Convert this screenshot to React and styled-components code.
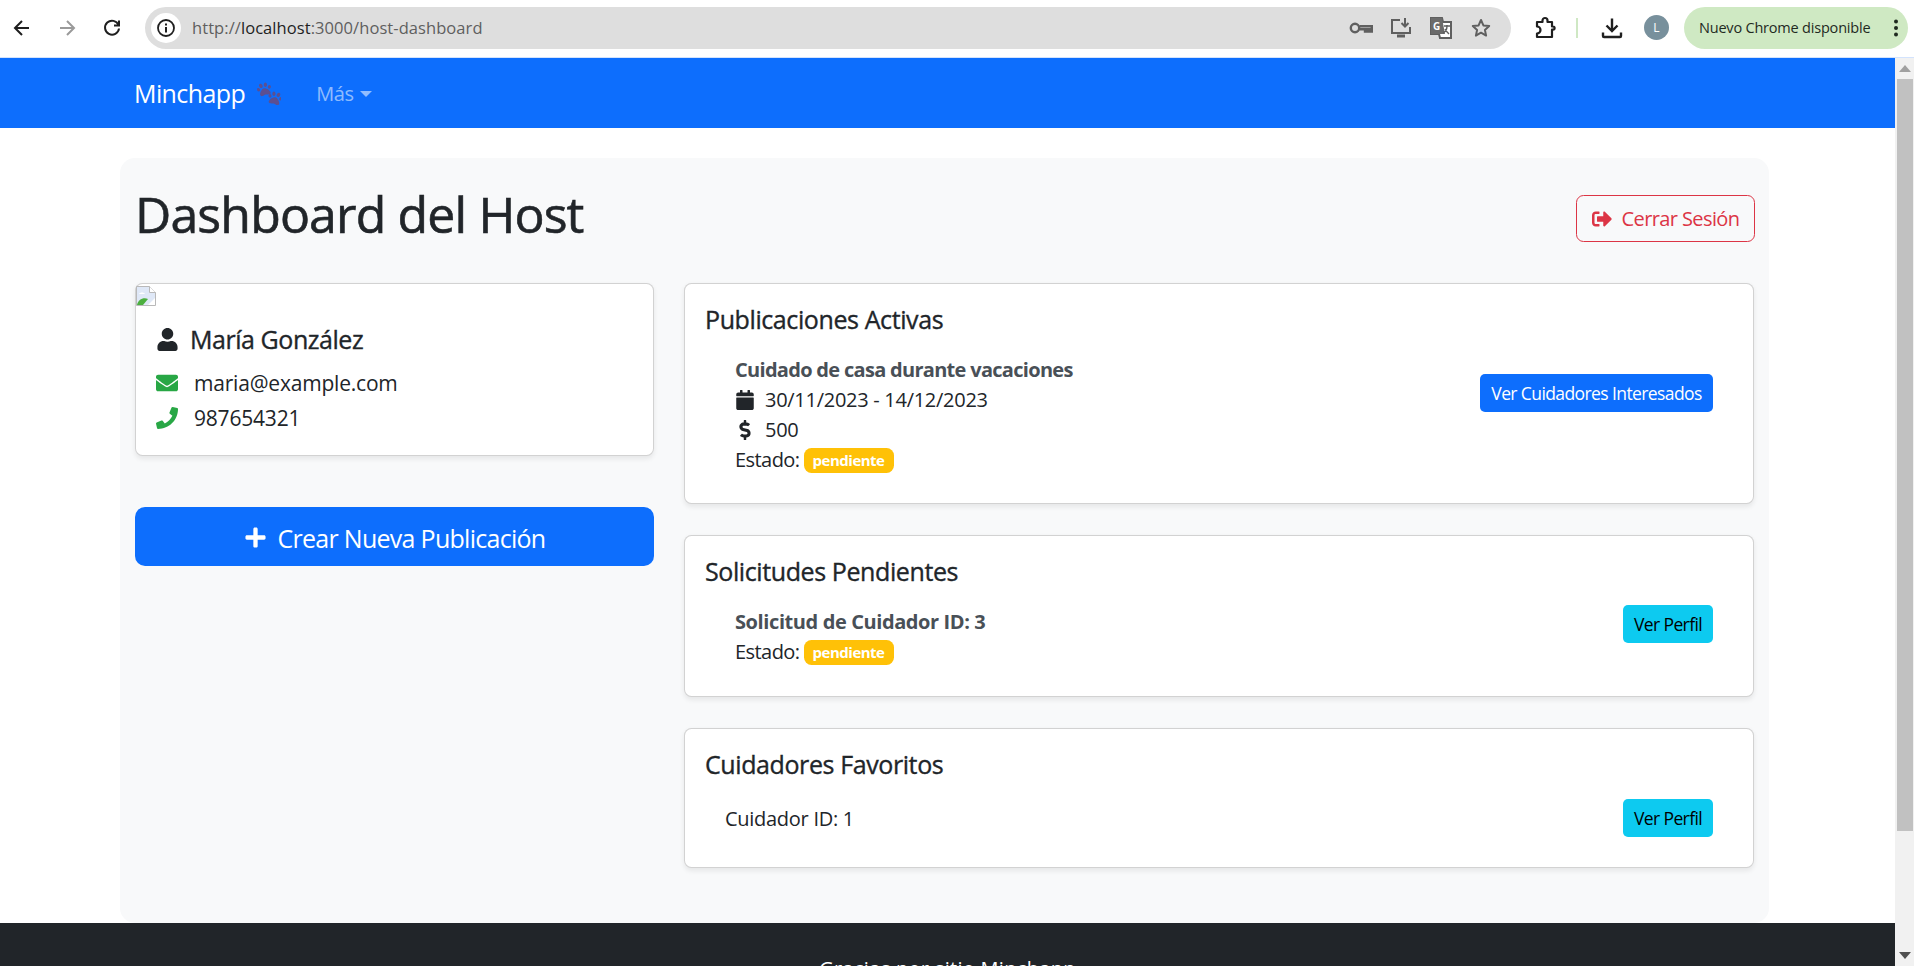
import React from 'react';
import styled, { createGlobalStyle } from 'styled-components';
import { FaUser, FaEnvelope, FaPhone, FaCalendar, FaDollarSign, FaSignOutAlt, FaPlus } from 'react-icons/fa';

const Global = createGlobalStyle`
  html, body { margin: 0; padding: 0; height: 966px; overflow: hidden; background: #fff; }
  * { box-sizing: border-box; }
  body { font-family: "Open Sans", "Liberation Sans", sans-serif; font-size: 20px; line-height: 30px; color: #212529; }
`;

const Window = styled.div`width: 1914px; height: 966px; display: flex; flex-direction: column; overflow: hidden;`;

const Toolbar = styled.header`
  height: 58px; flex: none; display: flex; align-items: center; background: #fff;
  border-bottom: 1px solid #d3e3fd; padding: 0 6px 2px 0;
`;
const NavIcon = styled.button`
  width: ${p => p.$w}px; height: 36px; border: 0; padding: 0; background: none; display: flex; align-items: center; justify-content: center;
  color: ${p => p.$muted ? '#9a9a9a' : '#1f1f1f'};
  flex: none;
`;
const Omnibox = styled.div`
  width: 1366px; height: 42px; margin-left: 11px; border-radius: 21px; background: #dedede; display: flex; align-items: center;
  padding: 0 6px; flex: none;
`;
const SiteBadge = styled.span`
  width: 30px; height: 30px; border-radius: 50%; background: #fff; display: flex; align-items: center; justify-content: center; flex: none; color: #1f1f1f;
`;
const Url = styled.span`font-size: 16.5px; color: #5f5f5f; margin-left: 11px; letter-spacing: 0.07px; flex: 1;
  b { font-weight: 400; color: #1f1f1f; }
`;
const BoxIcons = styled.span`display: flex; align-items: center; gap: 16px; padding-right: 12px; color: #5f5f5f;`;
const ToolIcon = styled.span`display: flex; width: 24px; height: 24px; align-items: center; justify-content: center; flex: none;`;
const ToolRight = styled.div`display: flex; align-items: center; flex: 1; color: #1f1f1f; padding-left: 22px;`;
const Divider = styled.span`width: 2px; height: 20px; background: #cfe8c4; margin: 0 22px 0 19px; flex: none;`;
const Avatar = styled.span`
  width: 25px; height: 25px; border-radius: 50%; background: #78909c; color: #fff; font-size: 12px; line-height: 25px; text-align: center; margin-left: 20px; flex: none;
`;
const UpdatePill = styled.div`
  margin-left: 15px; width: 224px; height: 42px; border-radius: 21px; background: #cfe9c3; display: flex; align-items: center; padding-left: 15px;
  font-size: 14.5px; color: #1f2a1f; letter-spacing: -0.2px; white-space: nowrap; flex: none;
`;
const Dots = styled.span`display: flex; margin-left: auto; margin-right: 10px;`;

const Viewport = styled.div`flex: 1; min-height: 0; display: flex;`;
const Page = styled.div`width: 1895px; flex: none; display: flex; flex-direction: column; overflow: hidden;`;
const Scrollbar = styled.div`width: 19px; flex: none; background: #f1f1f1; display: flex; flex-direction: column; align-items: center; padding: 0 1px 0 2px;`;
const ScrollArrow = styled.span`
  height: 21px; width: 100%; flex: none; display: flex; align-items: center; justify-content: center;
  svg { display: block; }
`;
const Thumb = styled.div`width: 100%; height: 752px; flex: none; background: #c1c1c1;`;
const Track = styled.div`flex: 1;`;

const Navbar = styled.nav`height: 70px; flex: none; background: #0d6efd; display: flex; align-items: center; padding-left: 134px;`;
const Brand = styled.a`font-size: 25px; color: #fff; letter-spacing: -0.6px; display: flex; align-items: center;`;
const Paw = styled.span`display: inline-flex; margin-left: 12px;`;
const NavLink = styled.a`font-size: 20px; color: rgba(255,255,255,.55); margin-left: 35px; padding-top: 2px; letter-spacing: -0.4px; display: flex; align-items: center;
  &::after { content: ''; margin-left: 6px; border-top: 6px solid; border-left: 6px solid transparent; border-right: 6px solid transparent; }
`;

const Panel = styled.main`
  flex: none; margin: 30px 126px 0 120px; height: 765px; padding: 25px 14px 0 15px; background: #f8f9fa; border-radius: 15px;
`;
const HeaderRow = styled.div`height: 70px; margin-bottom: 30px; display: flex; align-items: center; justify-content: space-between;`;
const Heading = styled.h1`margin: 0 0 8px; font-size: 50px; font-weight: 400; line-height: 60px; letter-spacing: -0.85px; -webkit-text-stroke: 0.6px currentColor;`;
const OutlineButton = styled.button`
  height: 47px; width: 179px; border: 1.25px solid #dc3545; border-radius: 7.5px; background: transparent; color: #dc3545; font: inherit; font-size: 20px; letter-spacing: -0.6px;
  display: flex; align-items: center; justify-content: center; gap: 10px; padding: 2px 0 0;
`;
const Columns = styled.div`display: grid; grid-template-columns: 519px 1070px; column-gap: 30px; align-items: start;`;
const Column = styled.div`display: flex; flex-direction: column;`;
const Card = styled.section`
  background: #fff; border: 1px solid rgba(0,0,0,.175); border-radius: 7.5px; box-shadow: 0 2.5px 5px rgba(0,0,0,.075);
  & + & { margin-top: 31px; }
`;
const BrokenImg = styled.span`display: block; width: 20px; height: 20px;`;
const ProfileBody = styled.div`padding: 20px 20px 22px;`;
const Name = styled.h5`margin: 0 0 14px; font-size: 25px; line-height: 30px; font-weight: 400; letter-spacing: -0.45px; -webkit-text-stroke: 0.35px currentColor; display: flex; align-items: center; gap: 11px;`;
const Contact = styled.p`margin: 0 0 5px; display: flex; align-items: center; font-size: 21px; letter-spacing: -0.2px; &:last-child { margin: 0; }
  svg { color: #28a745; flex: none; }
  span { margin-left: 16px; }
`;
const CreateButton = styled.button`
  margin-top: 51px; height: 59px; width: 100%; background: #0d6efd; color: #fff; border: 0; border-radius: 10px; font: inherit; font-size: 25px; letter-spacing: -0.72px;
  display: flex; align-items: center; justify-content: center; gap: 11px; padding: 2px 0 0;
`;
const CardBody = styled.div`padding: 20px;`;
const CardTitle = styled.h5`margin: 0 0 10px; font-size: 25px; line-height: 30px; font-weight: 400; letter-spacing: -0.4px; -webkit-text-stroke: 0.35px currentColor;`;
const Item = styled.div`display: flex; justify-content: space-between; align-items: flex-start; padding: 10px 20px ${p => p.$pb}px;`;
const ItemInfo = styled.div`margin-top: 1px; padding-left: ${p => p.$inset}px;`;
const ItemTitle = styled.div`font-weight: 700; color: #495057; letter-spacing: ${p => p.$ls}px;`;
const InfoLine = styled.div`display: flex; align-items: center; letter-spacing: -0.28px; min-height: ${p => p.$min || 30}px;`;
const IconSlot = styled.span`width: 20px; margin-right: 10px; display: flex; justify-content: center; flex: none;`;
const StatusLabel = styled.span`letter-spacing: -0.55px;`;
const Badge = styled.span`
  margin-left: 4px; height: 25px; width: 90px; border-radius: 7.5px; background: #ffc107; color: #fff; font-size: 15px; font-weight: 700; line-height: 25px; text-align: center; letter-spacing: -0.5px;
`;
const SmallButton = styled.button`
  height: 38px; padding: 0; width: ${p => p.$w}px; margin-top: ${p => p.$top}px; flex: none; border: 0; border-radius: 5px; font: inherit; font-size: 17.5px; line-height: 38px; letter-spacing: -0.6px;
  background: ${p => p.$info ? '#0dcaf0' : '#0d6efd'}; color: ${p => p.$info ? '#000' : '#fff'};
`;
const Footer = styled.footer`flex: none; height: 200px; background: #212529; color: #fff; text-align: center; padding: 31px 0 0; font-size: 20px; letter-spacing: 0.3px;`;

const Key = () => <svg width="24" height="14" viewBox="0 0 24 14" fill="none" stroke="currentColor" strokeWidth="2.400"><circle cx="6" cy="7" r="4.200"/><path d="M10.500 5.200H22.800V10.500h-2.300V8.300h-2.200v2.200h-2.300V8.300h-5.500"/></svg>;
const Install = () => <svg width="22" height="22" viewBox="0 0 22 22" fill="none" stroke="currentColor" strokeWidth="2"><path d="M10 3H2v13h18v-6"/><path d="M15 1v8M11.500 6l3.500 3.500L18.500 6"/><path d="M7 19h8" strokeWidth="3"/></svg>;
const Translate = () => <svg width="24" height="24" viewBox="0 0 24 24"><path d="M2 2h11l1 4h8v16H11l-1-4H2z" fill="#fff" stroke="#5f5f5f" strokeWidth="2"/><path d="M2 2h11l3 16H2z" fill="#6b6b6b"/><text x="4" y="14" fontSize="10" fontWeight="700" fill="#fff" fontFamily="Open Sans, sans-serif">G</text><path d="M15 10h6M18 9v1c0 3-2 6-4 7M16 13c1 2 3 4 4 5" stroke="#5f5f5f" strokeWidth="1.400" fill="none"/></svg>;
const Star = () => <svg width="20" height="20" viewBox="0 0 20 20" fill="none" stroke="currentColor" strokeWidth="2" strokeLinejoin="round"><path d="M10 2l2.400 5.400 5.800.6-4.300 3.900 1.200 5.700L10 14.700l-5.100 2.900 1.200-5.700L1.800 8l5.800-.6z"/></svg>;
const Puzzle = () => <svg width="22" height="24" viewBox="0 0 22 24" fill="none" stroke="currentColor" strokeWidth="2.200" strokeLinejoin="round"><path d="M3 6h5.500V4.500a2.500 2.500 0 0 1 5 0V6H18v4.500h1a1.600 1.600 0 0 1 0 3.200h-1V21H3v-3.500a3.500 3.500 0 0 0 0-7z"/></svg>;
const Download = () => <svg width="22" height="22" viewBox="0 0 22 22" fill="none" stroke="currentColor" strokeWidth="2.400"><path d="M11 1.500v12M5.500 8.500l5.500 5.500 5.500-5.500"/><path d="M2 15.500v3.500a1 1 0 0 0 1 1h16a1 1 0 0 0 1-1v-3.500"/></svg>;
const Kebab = () => <svg width="4" height="18" viewBox="0 0 4 18" fill="currentColor"><circle cx="2" cy="2.500" r="2"/><circle cx="2" cy="9" r="2"/><circle cx="2" cy="15.500" r="2"/></svg>;
const Info = () => <svg width="20" height="20" viewBox="0 0 20 20" fill="none" stroke="currentColor" strokeWidth="1.800"><circle cx="10" cy="10" r="8"/><path d="M10 9v5.500M10 5.500v2" strokeWidth="2"/></svg>;
const Back = () => <svg width="20" height="20" viewBox="0 0 20 20" fill="none" stroke="currentColor" strokeWidth="2"><path d="M17 10H3M10 3l-7 7 7 7"/></svg>;
const Forward = () => <svg width="20" height="20" viewBox="0 0 20 20" fill="none" stroke="currentColor" strokeWidth="2"><path d="M3 10h14M10 3l7 7-7 7"/></svg>;
const Reload = () => <svg width="20" height="20" viewBox="0 0 20 20" fill="none" stroke="currentColor" strokeWidth="2"><path d="M16.500 7A7 7 0 1 0 17 10.500"/><path d="M17 2.500V7.500H12" /></svg>;
const BrokenIcon = () => <svg width="20" height="20" viewBox="0 0 20 20"><path d="M.5.5h13l6 6v13H.5z" fill="#dfe8f7" stroke="#b9b9b9"/><path d="M13.500.5v6h6" fill="#fff" stroke="#b9b9b9"/><path d="M3 8c1-2 5-2 6 0z" fill="#fff"/><path d="M1 19c1-5 6-8 11-6l-5 6z" fill="#4caf3f"/><path d="M12 19l7-7v7z" fill="#fff"/></svg>;
const PawShape = () => <path d="M256 224c-79.410 0-192 122.760-192 200.250 0 34.900 26.810 55.750 71.740 55.750 48.840 0 81.090-25.080 120.260-25.080 39.510 0 71.850 25.080 120.260 25.080 44.930 0 71.740-20.850 71.740-55.750C448 346.760 335.410 224 256 224zm-147.280-12.610c-10.400-34.650-42.440-57.090-71.560-50.130-29.120 6.960-44.290 40.690-33.890 75.340 10.400 34.650 42.440 57.090 71.560 50.130 29.120-6.960 44.290-40.690 33.890-75.340zm84.720-20.780c30.940-8.140 46.420-49.940 34.580-93.360s-46.520-72.010-77.460-63.870-46.420 49.940-34.580 93.360c11.840 43.420 46.520 72.020 77.460 63.870zm281.390-29.340c-29.120-6.960-61.150 15.480-71.560 50.130-10.400 34.650 4.770 68.380 33.890 75.340 29.120 6.960 61.150-15.480 71.560-50.130 10.400-34.650-4.770-68.380-33.890-75.340zm-156.270 29.340c30.940 8.140 65.620-20.450 77.460-63.870 11.840-43.420-3.640-85.210-34.580-93.360s-65.620 20.450-77.460 63.870c-11.840 43.420 3.640 85.220 34.580 93.360z" />;
const PawPair = () => (
  <svg width="24" height="23" viewBox="0 0 24 23" fill="#5b4f92">
    <g transform="translate(0 0) scale(.028) rotate(-15 256 256)"><PawShape /></g>
    <g transform="translate(11 9) scale(.028) rotate(15 256 256)"><PawShape /></g>
  </svg>
);

export default function App() {
  return (
    <Window>
      <Global />
      <Toolbar>
        <NavIcon $w={44}><Back /></NavIcon>
        <NavIcon $w={46} $muted><Forward /></NavIcon>
        <NavIcon $w={44}><Reload /></NavIcon>
        <Omnibox>
          <SiteBadge><Info /></SiteBadge>
          <Url>http://<b>localhost</b>:3000/host-dashboard</Url>
          <BoxIcons>
            <ToolIcon><Key /></ToolIcon>
            <ToolIcon><Install /></ToolIcon>
            <ToolIcon><Translate /></ToolIcon>
            <ToolIcon><Star /></ToolIcon>
          </BoxIcons>
        </Omnibox>
        <ToolRight>
          <ToolIcon><Puzzle /></ToolIcon>
          <Divider />
          <ToolIcon><Download /></ToolIcon>
          <Avatar>L</Avatar>
          <UpdatePill>
            Nuevo Chrome disponible
            <Dots><Kebab /></Dots>
          </UpdatePill>
        </ToolRight>
      </Toolbar>
      <Viewport>
        <Page>
          <Navbar>
            <Brand>Minchapp<Paw><PawPair /></Paw></Brand>
            <NavLink>Más</NavLink>
          </Navbar>
          <Panel>
            <HeaderRow>
              <Heading>Dashboard del Host</Heading>
              <OutlineButton><FaSignOutAlt size={20} />Cerrar Sesión</OutlineButton>
            </HeaderRow>
            <Columns>
              <Column>
                <Card>
                  <BrokenImg><BrokenIcon /></BrokenImg>
                  <ProfileBody>
                    <Name><FaUser size={23} />María González</Name>
                    <Contact><FaEnvelope size={22} /><span>maria@example.com</span></Contact>
                    <Contact><FaPhone size={22} /><span>987654321</span></Contact>
                  </ProfileBody>
                </Card>
                <CreateButton><FaPlus size={23} />Crear Nueva Publicación</CreateButton>
              </Column>
              <Column>
                <Card>
                  <CardBody>
                    <CardTitle>Publicaciones Activas</CardTitle>
                    <Item $pb={8}>
                      <ItemInfo $inset={10}>
                        <ItemTitle $ls={-0.7}>Cuidado de casa durante vacaciones</ItemTitle>
                        <InfoLine><IconSlot><FaCalendar size={20} /></IconSlot>30/11/2023 - 14/12/2023</InfoLine>
                        <InfoLine><IconSlot><FaDollarSign size={20} /></IconSlot>500</InfoLine>
                        <InfoLine><StatusLabel>Estado:</StatusLabel><Badge>pendiente</Badge></InfoLine>
                      </ItemInfo>
                      <SmallButton $w={233} $top={20}>Ver Cuidadores Interesados</SmallButton>
                    </Item>
                  </CardBody>
                </Card>
                <Card>
                  <CardBody>
                    <CardTitle>Solicitudes Pendientes</CardTitle>
                    <Item $pb={9}>
                      <ItemInfo $inset={10}>
                        <ItemTitle $ls={-0.4}>Solicitud de Cuidador ID: 3</ItemTitle>
                        <InfoLine><StatusLabel>Estado:</StatusLabel><Badge>pendiente</Badge></InfoLine>
                      </ItemInfo>
                      <SmallButton $info $w={90} $top={-1}>Ver Perfil</SmallButton>
                    </Item>
                  </CardBody>
                </Card>
                <Card>
                  <CardBody>
                    <CardTitle>Cuidadores Favoritos</CardTitle>
                    <Item $pb={9}>
                      <ItemInfo $inset={0}><InfoLine $min={38}>Cuidador ID: 1</InfoLine></ItemInfo>
                      <SmallButton $info $w={90} $top={0}>Ver Perfil</SmallButton>
                    </Item>
                  </CardBody>
                </Card>
              </Column>
            </Columns>
          </Panel>
          <Footer>Gracias por sitio Minchapp</Footer>
        </Page>
        <Scrollbar>
          <ScrollArrow><svg width="12" height="7" viewBox="0 0 12 7" fill="#a0a0a0"><path d="M6 0l6 7H0z"/></svg></ScrollArrow>
          <Thumb />
          <Track />
          <ScrollArrow><svg width="12" height="7" viewBox="0 0 12 7" fill="#505050"><path d="M0 0h12L6 7z"/></svg></ScrollArrow>
        </Scrollbar>
      </Viewport>
    </Window>
  );
}
